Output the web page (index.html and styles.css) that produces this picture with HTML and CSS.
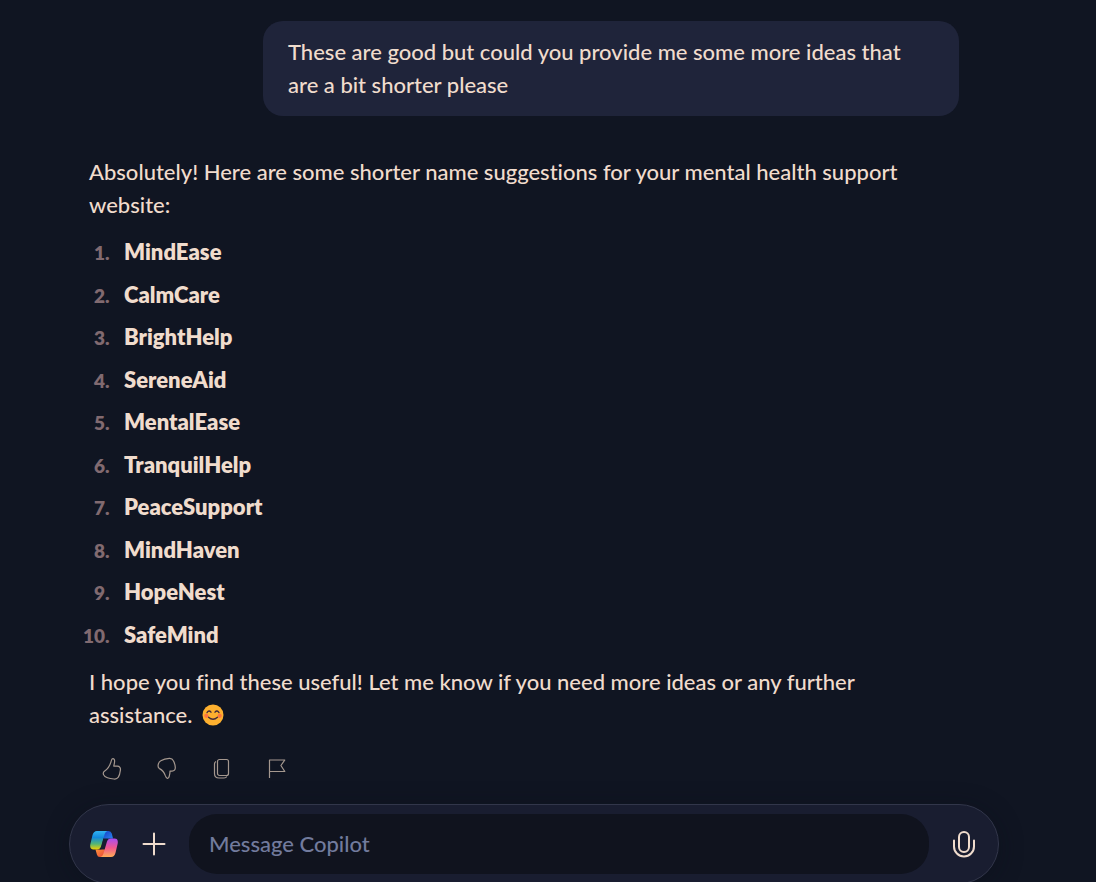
FILE: index.html
```html
<!DOCTYPE html>
<html lang="en">
<head>
<meta charset="utf-8">
<meta name="viewport" content="width=device-width, initial-scale=1">
<title>Copilot</title>
<link rel="stylesheet" href="styles.css">
</head>
<body>
<main class="page">
  <section class="chat">
    <p class="bubble">These are good but could you provide me some more ideas that are a bit shorter please</p>
    <article class="reply">
      <p class="text">Absolutely! Here are some shorter name suggestions for your mental health support website:</p>
      <ol class="names">
        <li>MindEase</li>
        <li>CalmCare</li>
        <li>BrightHelp</li>
        <li>SereneAid</li>
        <li>MentalEase</li>
        <li>TranquilHelp</li>
        <li>PeaceSupport</li>
        <li>MindHaven</li>
        <li>HopeNest</li>
        <li>SafeMind</li>
      </ol>
      <p class="text">I hope you find these useful! Let me know if you need more ideas or any further assistance.
        <svg class="emoji" viewBox="0 0 22 22" role="img" aria-label="Smiling face">
          <circle cx="11" cy="11" r="10.500" fill="#fdb02f"/>
          <circle cx="4.300" cy="11.800" r="2.100" fill="#ff7440"/>
          <circle cx="17.700" cy="11.800" r="2.100" fill="#ff7440"/>
          <path d="M5 8.600Q7 5.600 9 8.200M13 8.200Q15 5.600 17 8.600M6.500 13.200Q11 17.200 15.500 13.200" fill="none" stroke="#42293a" stroke-width="1.300" stroke-linecap="round"/>
        </svg>
      </p>
    </article>
    <div class="actions">
      <button type="button" aria-label="Like">
        <svg viewBox="0 0 24 24"><path d="M10.900 6.100c.4-1.400.7-3.400 1.900-3.400 1.500 0 1.900 1.400 1.800 2.800-.1 1.700-.5 3-.8 4.600h3.400c2.500 0 3.500 1.800 3.200 4-.3 2.700-.9 5.300-2.200 7.200-.9 1.400-2.300 1.900-4.200 1.700-2-.2-4.600-.6-6.600-1.300-1.800-.6-3.300-1.500-3.900-3.100-.5-1.500-.2-2.800 1.200-3.700 3.500-2.200 4.900-4.500 6.200-8.800z"/></svg>
      </button>
      <button type="button" aria-label="Dislike">
        <svg viewBox="0 0 24 24"><path d="M14.300 20c-.3 1.400-.8 2.500-1.900 2.300-1.300-.2-1.700-1.400-2.200-2.900-.9-3-2.700-5.200-5.700-6.800-1.400-.8-1.600-2.300-1.300-3.900.3-1.600 1.100-3.200 2.600-4 2.500-1.500 5.700-2.200 8.600-2.300 1.900-.1 3.200.6 4 2.300 1 2 1.800 4.500 1.900 6.900.1 2.100-1.100 3.500-3.200 3.500H15c.1 1.800-.3 3.200-.7 4.900z"/></svg>
      </button>
      <button type="button" aria-label="Copy">
        <svg viewBox="0 0 24 24"><rect x="7.500" y="3.500" width="11" height="16" rx="2"/><path d="M6 5.500Q4.500 6.300 4.500 8v9.500q0 4.500 4.500 4.500h5q2 0 2.800-1.500"/></svg>
      </button>
      <button type="button" aria-label="Report">
        <svg viewBox="0 0 24 24"><path d="M4.500 22V4h15.300l-3.900 5.500 3.900 6H4.500"/></svg>
      </button>
    </div>
  </section>
  <form class="composer">
    <button type="button" class="tool" aria-label="Copilot home">
      <svg class="logo" viewBox="0 0 28 26">
        <defs>
          <linearGradient id="cool" x1="0" y1="0" x2="0" y2="1"><stop offset="0" stop-color="#30b3f3"/><stop offset=".35" stop-color="#1389dc"/><stop offset=".7" stop-color="#55b574"/><stop offset="1" stop-color="#f4d000"/></linearGradient>
          <linearGradient id="warm" x1="0" y1="0" x2="0" y2="1"><stop offset="0" stop-color="#a94df2"/><stop offset=".5" stop-color="#f2578f"/><stop offset="1" stop-color="#ffad55"/></linearGradient>
          <linearGradient id="blue" x1="0" y1="0" x2="1" y2="1"><stop offset="0" stop-color="#173ec4"/><stop offset="1" stop-color="#2b8cf4"/></linearGradient>
          <linearGradient id="red" x1="0" y1="0" x2="1" y2="1"><stop offset="0" stop-color="#ff9a3c"/><stop offset="1" stop-color="#ea4436"/></linearGradient>
        </defs>
        <path fill="url(#blue)" d="M14 0h4.500q2.600 0 3.300 2.600L23 7.500h-4q-2.600 0-3.600 1.800L13 7z"/>
        <path fill="url(#red)" d="M14 26h-4q-2.500 0-3.100-2.500L5.500 18.500h4.200q2 0 3-1.600L15 19z"/>
        <path fill="url(#cool)" d="M7 0h10.500q-2 .4-2.800 3L11 15.500Q10 18.500 7 18.500H3.500Q-.5 18.500.3 13.500L2.400 4.500Q3.500 0 7 0z"/>
        <path fill="url(#warm)" d="M21 7.500h3.500q4 0 3.200 5l-2.100 9Q24.500 26 21 26H10.500q2-.4 2.800-3L17 10.500Q18 7.500 21 7.500z"/>
        <path fill="#191d30" d="M13.500 7.500h4.500q-1.300 1-2 3.500L13.900 18.500H9.500q1.400-1 2-3z"/>
      </svg>
    </button>
    <button type="button" class="tool" aria-label="Add">
      <svg class="plus" viewBox="0 0 24 24"><path d="M12 1.500v21M1.500 12h21"/></svg>
    </button>
    <input class="message" type="text" placeholder="Message Copilot" aria-label="Message Copilot">
    <button type="button" class="tool" aria-label="Use microphone">
      <svg class="mic" viewBox="0 0 24 28"><rect x="7" y="2" width="10" height="20" rx="5"/><path d="M2 10.500v6a10 10 0 0 0 20 0v-6"/></svg>
    </button>
  </form>
</main>
</body>
</html>
```
FILE: styles.css
```css
* {
  box-sizing: border-box;
}

body {
  margin: 0;
  padding-right: 28px;
  background: #101522;
  color: #f0dccd;
  font: 500 22px/33px Lato, "Open Sans", sans-serif;
  font-variant-ligatures: none;
  overflow: hidden;
}

button {
  padding: 0;
  border: 0;
  background: none;
  color: inherit;
  cursor: pointer;
}

svg {
  display: block;
  fill: none;
  stroke: currentColor;
}

.page {
  max-width: 930px;
  margin: 0 auto;
  padding-top: 21px;
}

.chat {
  display: flex;
  flex-direction: column;
  padding: 0 40px 0 20px;
}

.bubble {
  align-self: flex-end;
  width: 80%;
  margin: 0 0 39px;
  padding: 14px 25px 15px;
  border-radius: 20px;
  background: #1f243a;
}

.text {
  margin: 0;
}

.names {
  display: flex;
  flex-direction: column;
  margin: 14px 0;
  padding: 0 0 0 25px;
  font-weight: 800;
}

.names li {
  padding-left: 10px;
}

.names li + li {
  margin-top: 10px;
}

.names li:nth-child(odd) {
  margin-top: 9px;
}

.names li:first-child {
  margin-top: 0;
}

.names li::marker {
  color: #816a70;
  font-size: 19px;
}

.emoji {
  display: inline-block;
  width: 22px;
  height: 22px;
  margin-left: 4px;
  vertical-align: -3px;
  stroke: none;
}

.actions {
  display: flex;
  gap: 31px;
  margin: 24px 0 23px;
  padding-left: 11px;
  color: #a5988f;
}

.actions svg {
  width: 24px;
  height: 26px;
  stroke-width: 1.2;
  stroke-linejoin: round;
}

.composer {
  display: flex;
  align-items: center;
  height: 80px;
  padding: 0 22px 0 20px;
  border: 1px solid #32364a;
  border-radius: 40px;
  background: #191d30;
  box-shadow: 0 4px 24px #0b0f1a66;
}

.tool {
  display: grid;
  place-items: center;
  flex: none;
}

.tool + .tool {
  margin-left: 24px;
}

.logo {
  width: 28px;
  height: 26px;
  stroke: none;
}

.plus {
  width: 24px;
  height: 24px;
  stroke-width: 2;
  stroke-linecap: round;
}

.message {
  flex: 1;
  min-width: 0;
  height: 60px;
  margin: 0 23px;
  padding: 0 20px 2px;
  border: 0;
  border-radius: 28px;
  outline: 0;
  background: #10131e;
  color: inherit;
  font: inherit;
}

.message::placeholder {
  color: #727b9d;
  opacity: 1;
}

.mic {
  width: 24px;
  height: 28px;
  stroke-width: 2;
  stroke-linecap: round;
}
```
